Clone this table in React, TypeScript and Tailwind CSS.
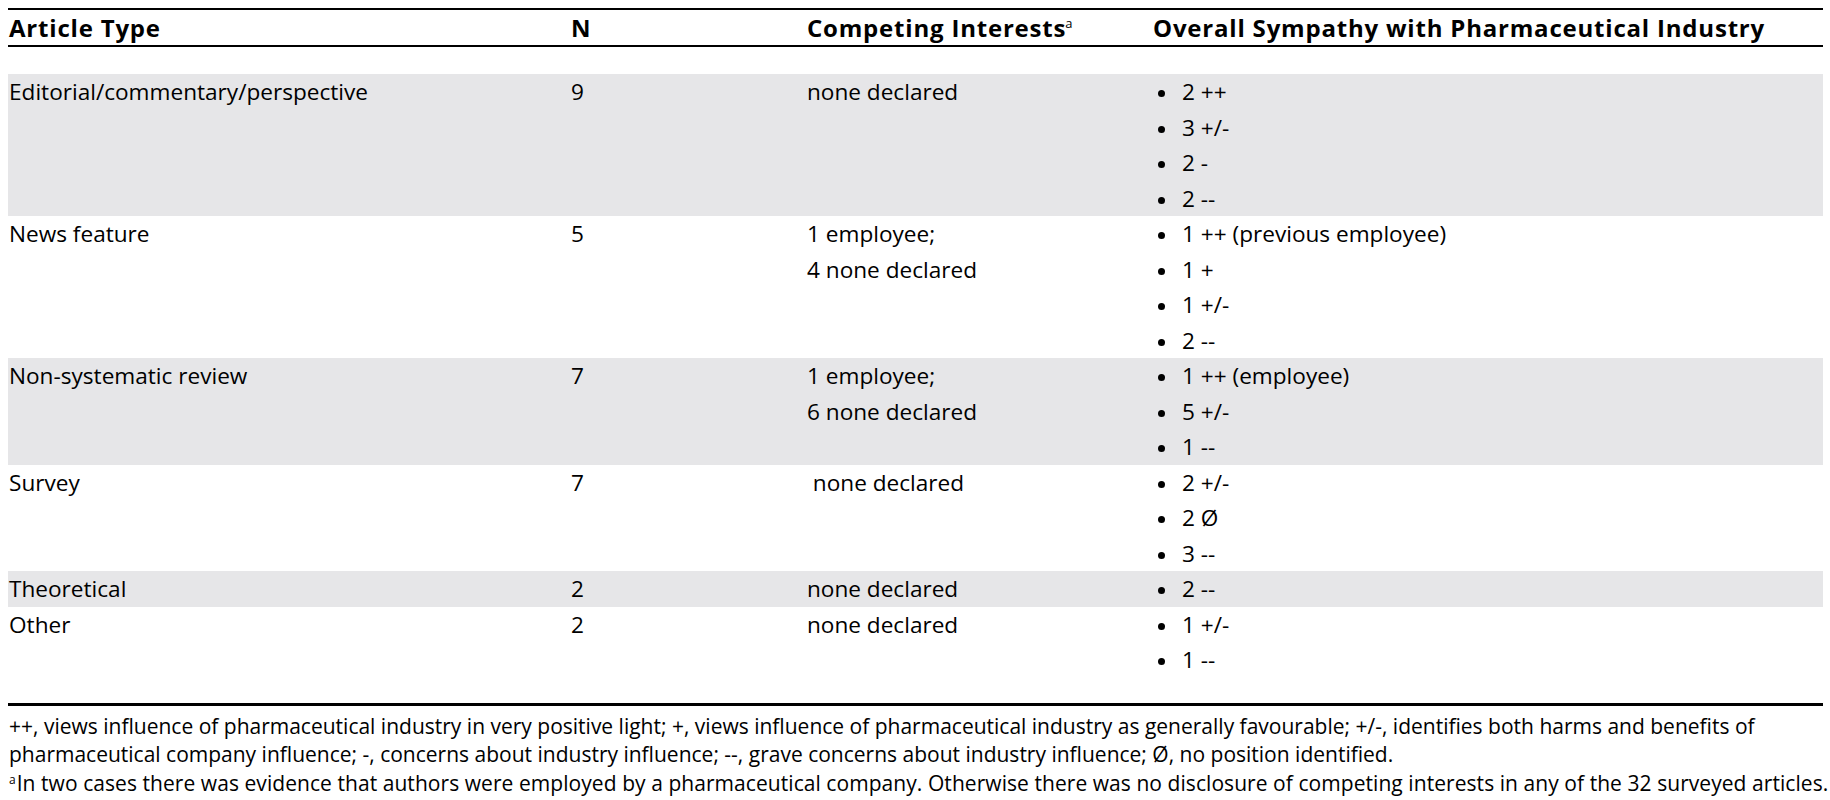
import React from "react";

type Row = {
  type: string;
  n: string;
  ci: string[];
  sym: string[];
  gray: boolean;
};

const rows: Row[] = [
  {
    type: "Editorial/commentary/perspective",
    n: "9",
    ci: ["none declared"],
    sym: ["2 ++", "3 +/-", "2 -", "2 --"],
    gray: true,
  },
  {
    type: "News feature",
    n: "5",
    ci: ["1 employee;", "4 none declared"],
    sym: ["1 ++ (previous employee)", "1 +", "1 +/-", "2 --"],
    gray: false,
  },
  {
    type: "Non-systematic review",
    n: "7",
    ci: ["1 employee;", "6 none declared"],
    sym: ["1 ++ (employee)", "5 +/-", "1 --"],
    gray: true,
  },
  {
    type: "Survey",
    n: "7",
    ci: [" none declared"],
    sym: ["2 +/-", "2 \u00D8", "3 --"],
    gray: false,
  },
  {
    type: "Theoretical",
    n: "2",
    ci: ["none declared"],
    sym: ["2 --"],
    gray: true,
  },
  {
    type: "Other",
    n: "2",
    ci: ["none declared"],
    sym: ["1 +/-", "1 --"],
    gray: false,
  },
];

export default function App() {
  return (
    <div
      className="w-[1830px] h-[800px] bg-white text-black overflow-hidden"
      style={{ fontFamily: '"Open Sans", "Noto Sans", sans-serif' }}
    >
      <div className="ml-[8px] mr-[7px] pt-[8px]">
        {/* Header */}
        <div className="border-t-2 border-b-2 border-black grid grid-cols-[563px_236px_346px_1fr] h-[39px] font-bold text-[24px] leading-[35px] tracking-[0.8px]">
          <div className="pl-[1px]">Article Type</div>
          <div>N</div>
          <div className="whitespace-nowrap">
            Competing Interests
            <span className="inline-block text-[13px] font-normal leading-none tracking-normal relative -top-[9px] -ml-[1px]">a</span>
          </div>
          <div>Overall Sympathy with Pharmaceutical Industry</div>
        </div>

        {/* Body */}
        <div className="pt-[27px] pb-[25px] border-b-[3px] border-black text-[22.6px] leading-[35.5px]">
          {rows.map((r, i) => (
            <div
              key={i}
              className={
                "grid grid-cols-[563px_236px_346px_1fr] " +
                (r.gray ? "bg-[#e6e6e8]" : "bg-white")
              }
            >
              <div className="pl-[1px]">{r.type}</div>
              <div>{r.n}</div>
              <div className="whitespace-pre">
                {r.ci.map((c, j) => (
                  <div key={j}>{c}</div>
                ))}
              </div>
              <div>
                {r.sym.map((s, j) => (
                  <div key={j} className="flex items-start h-[35.5px]">
                    <span className="inline-block shrink-0 w-[7px] h-[7px] rounded-full bg-black mt-[16px] ml-[5px]" />
                    <span className="ml-[17px]">{s}</span>
                  </div>
                ))}
              </div>
            </div>
          ))}
        </div>

        {/* Footnotes */}
        <div className="pt-[6px] text-[21px] leading-[28.5px] whitespace-nowrap">
          <div className="pl-[1px]">
            ++, views influence of pharmaceutical industry in very positive light; +, views influence of pharmaceutical industry as generally favourable; +/-, identifies both harms and benefits of
          </div>
          <div className="pl-[1px]">
            pharmaceutical company influence; -, concerns about industry influence; --, grave concerns about industry influence; {"\u00D8"}, no position identified.
          </div>
          <div className="pl-[1px] flex items-start">
            <span className="inline-block text-[12px] leading-none relative top-[5px] mr-[1px]">a</span>
            <span className="tracking-[0.06px]">
              In two cases there was evidence that authors were employed by a pharmaceutical company. Otherwise there was no disclosure of competing interests in any of the 32 surveyed articles.
            </span>
          </div>
        </div>
      </div>
    </div>
  );
}
